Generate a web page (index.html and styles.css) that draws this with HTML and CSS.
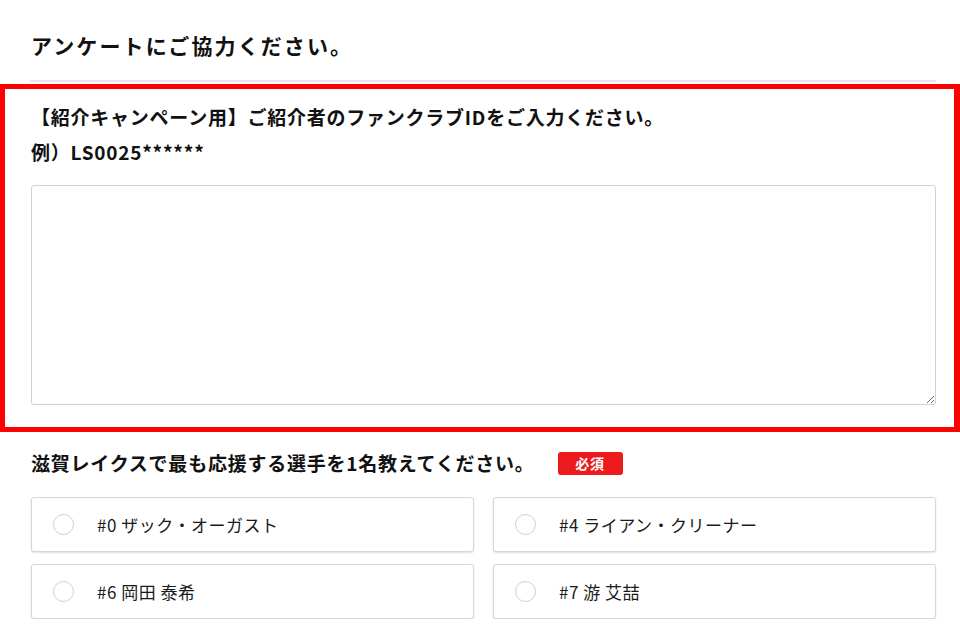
FILE: index.html
```html
<!DOCTYPE html>
<html lang="ja">
<head>
<meta charset="utf-8">
<link rel="stylesheet" href="styles.css">
</head>
<body>
<main class="page">
  <h1 class="title">アンケートにご協力ください。</h1>
  <div class="divider"></div>
  <section class="highlight">
    <p class="q-label">【紹介キャンペーン用】ご紹介者のファンクラブIDをご入力ください。</p>
    <p class="q-label">例）LS0025******</p>
    <textarea class="answer"></textarea>
  </section>
  <div class="question">
    <span class="q-text">滋賀レイクスで最も応援する選手を1名教えてください。</span>
    <span class="badge">必須</span>
  </div>
  <div class="options">
    <label class="option"><span class="radio"></span><span class="opt-text">#0 ザック・オーガスト</span></label>
    <label class="option"><span class="radio"></span><span class="opt-text">#4 ライアン・クリーナー</span></label>
    <label class="option"><span class="radio"></span><span class="opt-text">#6 岡田 泰希</span></label>
    <label class="option"><span class="radio"></span><span class="opt-text">#7 游 艾喆</span></label>
  </div>
</main>
</body>
</html>
```

FILE: styles.css
```css
html, body {
  margin: 0;
  padding: 0;
  background: #fff;
}
body {
  font-family: "Noto Sans CJK JP", "Noto Sans", sans-serif;
  color: #111;
}
.page {
  padding: 30px 24px 0 31px;
}
.title {
  margin: 0;
  font-size: 21px;
  line-height: 30px;
  font-weight: 700;
  letter-spacing: 0.1em;
}
.divider {
  height: 2px;
  background: #e6e6e6;
  margin: 20px 0 0 -1px;
}
.highlight {
  margin: 2px -24px 0 -31px;
  border: 5px solid #ff0000;
  border-right-width: 6px;
  padding: 10px 18px 22px 26px;
}
.q-label {
  margin: 0;
  font-size: 19px;
  line-height: 35px;
  font-weight: 700;
  letter-spacing: 0.04em;
}
.answer {
  display: block;
  box-sizing: border-box;
  width: 100%;
  height: 220px;
  margin-top: 16px;
  border: 1px solid #d2d2d2;
  border-radius: 3px;
  resize: vertical;
  font-family: inherit;
  outline: none;
  background: #fff;
}
.question {
  display: flex;
  align-items: center;
  margin-top: 16px;
  height: 30px;
}
.q-text {
  font-size: 19px;
  line-height: 30px;
  font-weight: 700;
  letter-spacing: 0.04em;
}
.badge {
  margin-left: 23px;
  width: 65px;
  height: 23px;
  border-radius: 3px;
  background: #ec1a1c;
  color: #fff;
  font-size: 14px;
  font-weight: 700;
  line-height: 23px;
  text-align: center;
  letter-spacing: 0.05em;
}
.options {
  display: grid;
  grid-template-columns: 1fr 1fr;
  column-gap: 19px;
  row-gap: 12px;
  margin-top: 19px;
}
.option {
  display: flex;
  align-items: center;
  height: 55px;
  box-sizing: border-box;
  border: 1px solid #d6d6d6;
  border-radius: 3px;
  box-shadow: 0 1px 2px rgba(0, 0, 0, 0.12);
  padding-left: 21px;
  background: #fff;
}
.radio {
  width: 19px;
  height: 19px;
  border: 1px solid #cfcfcf;
  border-radius: 50%;
  flex: none;
}
.opt-text {
  margin-left: 23px;
  font-size: 17px;
  letter-spacing: 0.03em;
  color: #1a1a1a;
}
```
